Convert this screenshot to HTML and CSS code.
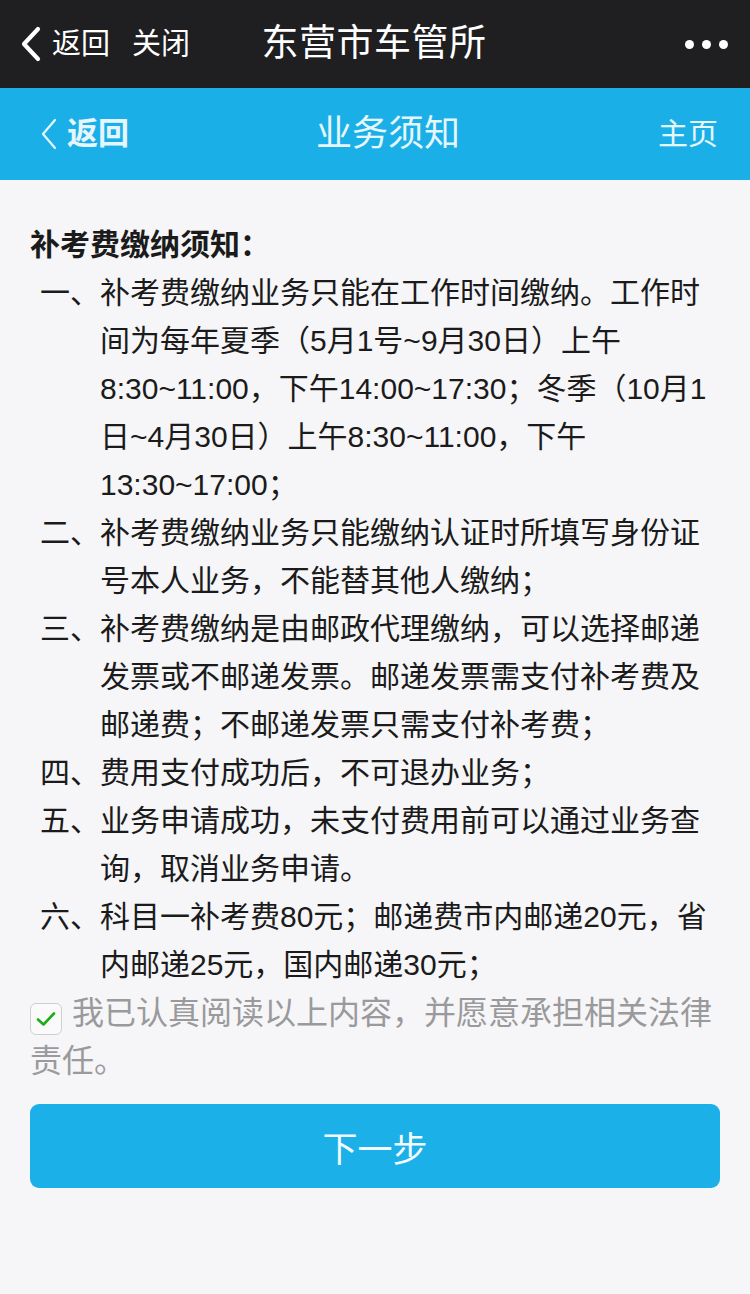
FILE: index.html
```html
<!DOCTYPE html>
<html lang="zh-CN">
<head>
<meta charset="utf-8">
<title>业务须知</title>
<link rel="stylesheet" href="styles.css">
</head>
<body>
<div class="page">
  <header class="topbar">
    <div class="top-left">
      <svg class="top-chevron" width="22" height="36" viewBox="0 0 22 36"><path d="M18 3 L4 18 L18 33" fill="none" stroke="#fff" stroke-width="4.2" stroke-linecap="round" stroke-linejoin="round"/></svg>
      <span class="top-link">返回</span>
      <span class="top-link close">关闭</span>
    </div>
    <div class="top-title">东营市车管所</div>
    <div class="top-right">
      <span class="dot"></span><span class="dot"></span><span class="dot"></span>
    </div>
  </header>

  <nav class="navbar">
    <div class="nav-left">
      <svg class="nav-chevron" width="18" height="32" viewBox="0 0 18 32"><path d="M15 2 L3 16 L15 30" fill="none" stroke="#e6f6fd" stroke-width="2.2" stroke-linecap="round" stroke-linejoin="round"/></svg>
      <span class="nav-back">返回</span>
    </div>
    <div class="nav-title">业务须知</div>
    <div class="nav-right">主页</div>
  </nav>

  <main class="content">
    <h1 class="notice-title">补考费缴纳须知：</h1>
    <ol class="notice-list">
      <li class="item"><span class="num">一、</span><span class="txt">补考费缴纳业务只能在工作时间缴纳。工作时间为每年夏季（5月1号~9月30日）上午8:30~11:00，下午14:00~17:30；冬季（10月1日~4月30日）上午8:30~11:00，下午13:30~17:00；</span></li>
      <li class="item"><span class="num">二、</span><span class="txt">补考费缴纳业务只能缴纳认证时所填写身份证号本人业务，不能替其他人缴纳；</span></li>
      <li class="item"><span class="num">三、</span><span class="txt">补考费缴纳是由邮政代理缴纳，可以选择邮递发票或不邮递发票。邮递发票需支付补考费及邮递费；不邮递发票只需支付补考费；</span></li>
      <li class="item"><span class="num">四、</span><span class="txt">费用支付成功后，不可退办业务；</span></li>
      <li class="item"><span class="num">五、</span><span class="txt">业务申请成功，未支付费用前可以通过业务查询，取消业务申请。</span></li>
      <li class="item"><span class="num">六、</span><span class="txt">科目一补考费80元；邮递费市内邮递20元，省内邮递25元，国内邮递30元；</span></li>
    </ol>
    <p class="agree"><span class="checkbox"><svg width="22" height="18" viewBox="0 0 22 18"><path d="M3 9.5 L8.5 14.5 L19 3.5" fill="none" stroke="#1aad19" stroke-width="2.6" stroke-linecap="round" stroke-linejoin="round"/></svg></span>我已认真阅读以上内容，并愿意承担相关法律责任。</p>
    <button class="next-btn" type="button">下一步</button>
  </main>
</div>
</body>
</html>
```

FILE: styles.css
```css
* { box-sizing: border-box; }
html, body { margin: 0; padding: 0; }
body {
  background: #f6f6f8;
  font-family: "Liberation Sans", "Noto Sans CJK SC", sans-serif;
  color: #1b1b1b;
}
.page { width: 750px; min-height: 1294px; background: #f6f6f8; }

.topbar {
  height: 88px;
  background: #1f1e21;
  color: #fff;
  display: grid;
  grid-template-columns: 1fr auto 1fr;
  align-items: center;
  padding: 0 22px 0 20px;
}
.top-left { display: flex; align-items: center; }
.top-chevron { display: block; margin-right: 10px; }
.top-link { font-size: 29px; line-height: 40px; }
.top-link.close { margin-left: 22px; }
.top-title { font-size: 37px; line-height: 48px; letter-spacing: 0.5px; }
.top-right { display: flex; justify-content: flex-end; gap: 8px; }
.dot { width: 9px; height: 9px; border-radius: 50%; background: #fff; }

.navbar {
  height: 92px;
  background: #1bafe7;
  color: #e6f6fd;
  display: grid;
  grid-template-columns: 1fr auto 1fr;
  align-items: center;
  padding: 0 32px 0 40px;
}
.nav-left { display: flex; align-items: center; }
.nav-chevron { display: block; margin-right: 9px; }
.nav-back { font-size: 31px; font-weight: bold; line-height: 40px; }
.nav-title { font-size: 36px; line-height: 44px; margin-left: 18px; }
.nav-right { font-size: 30px; line-height: 40px; text-align: right; }

.content { padding: 41px 30px 0 30px; }
.notice-title {
  margin: 0;
  font-size: 30px;
  font-weight: bold;
  line-height: 48px;
  color: #1b1b1b;
}
.notice-list { list-style: none; margin: 0; padding: 0; }
.item {
  display: grid;
  grid-template-columns: 60px 1fr;
  padding-left: 10px;
  font-size: 30px;
  line-height: 48px;
}
.agree {
  margin: 0;
  font-size: 32px;
  line-height: 48px;
  color: #9a9a9c;
}
.checkbox {
  display: inline-flex;
  align-items: center;
  justify-content: center;
  width: 32px;
  height: 32px;
  border: 1.5px solid #cfcfd1;
  border-radius: 6px;
  background: #fafafa;
  vertical-align: -4px;
  margin-right: 10px;
}
.next-btn {
  display: block;
  width: 100%;
  height: 84px;
  margin-top: 19px;
  border: none;
  border-radius: 9px;
  background: #1bb0e7;
  color: #f2fbff;
  font-family: "Liberation Sans", "Noto Sans CJK SC", sans-serif;
  font-size: 35px;
}
```
